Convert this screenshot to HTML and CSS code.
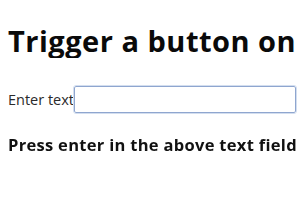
FILE: index.html
```html
<!DOCTYPE html>
<html lang="en">
<head>
  <meta charset="UTF-8" />
  <title>Trigger a button on enter</title>
  <link rel="stylesheet" href="styles.css">
</head>
<body>
  <h1>Trigger a button on enter key</h1>

  <div class="field-row">
    <label for="myInput">Enter text</label><input id="myInput" class="text-input" type="text" autofocus>
  </div>

  <p class="hint">Press enter in the above text field to trigger the button</p>

  <script>
    document.getElementById("myInput").focus();
  </script>
</body>
</html>
```

FILE: styles.css
```css
body {
  font-family: 'Open Sans', 'Noto Sans', sans-serif;
  margin: 8px 0 8px 8px;
  color: #000;
}
h1 {
  font-size: 29px;
  letter-spacing: 0.5px;
  font-weight: bold;
  margin: 16px 0 0 0;
  line-height: 34px;
  color: #0a0a0a;
  white-space: nowrap;
  overflow: hidden;
}
.field-row {
  display: flex;
  align-items: center;
  margin-top: 28px;
}
.field-row label {
  font-size: 14.5px;
  color: #2a2a2a;
  white-space: nowrap;
}
.text-input {
  width: 222px;
  height: 27px;
  box-sizing: border-box;
  border: 1px solid #8fa6cf;
  border-radius: 2px;
  outline: 1px solid #d3deef;
  padding: 0 2px;
  font-size: 14px;
  caret-color: #b0202a;
}
.hint {
  font-size: 16.5px;
  letter-spacing: 0.3px;
  font-weight: bold;
  line-height: 20px;
  margin: 22px 0 0 0;
  color: #111;
  white-space: nowrap;
  overflow: hidden;
}
```
